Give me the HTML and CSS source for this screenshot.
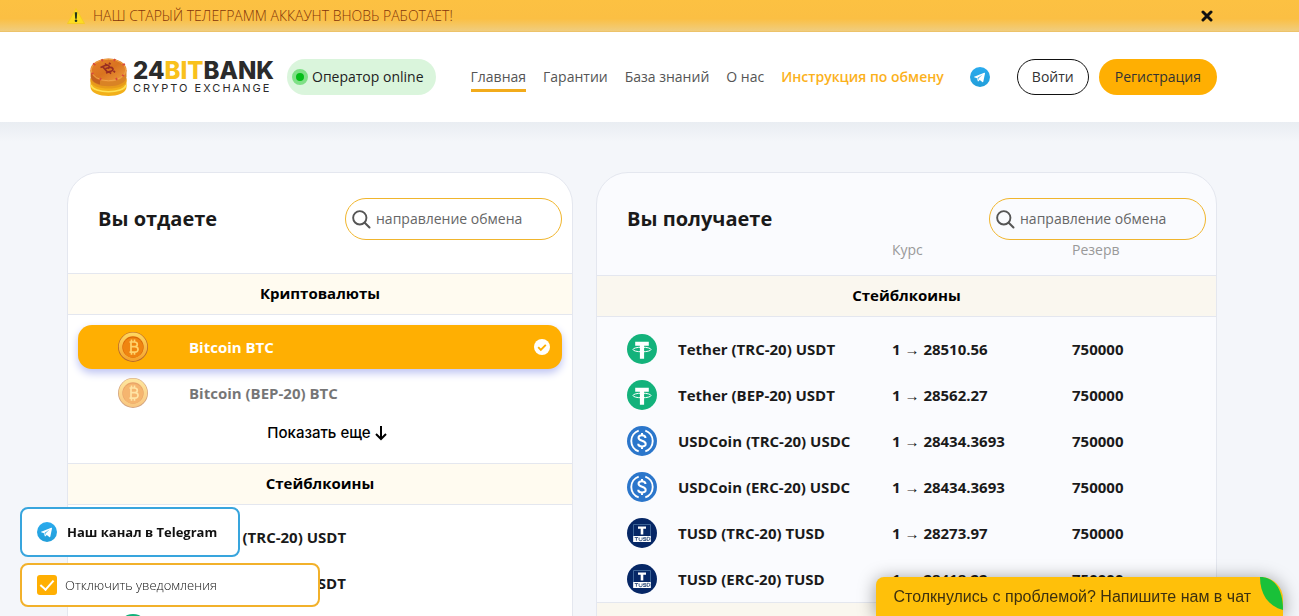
FILE: index.html
```html
<!DOCTYPE html>
<html lang="ru">
<head>
<meta charset="utf-8">
<meta name="viewport" content="width=device-width, initial-scale=1">
<title>24BitBank</title>
<link rel="stylesheet" href="styles.css">
</head>
<body>
<svg class="sprite" aria-hidden="true">
  <defs>
    <linearGradient id="goldFace" x1="0" y1="0" x2="1" y2="1"><stop offset="0" stop-color="#e8832c"/><stop offset=".5" stop-color="#d9731f"/><stop offset="1" stop-color="#f0a040"/></linearGradient>
    <linearGradient id="btcRing" x1="0" y1="0" x2="0" y2="1"><stop offset="0" stop-color="#ffd860"/><stop offset="1" stop-color="#f5a22c"/></linearGradient>
    <linearGradient id="tgBlue" x1="0" y1="0" x2="0" y2="1"><stop offset="0" stop-color="#2aabee"/><stop offset="1" stop-color="#229ed9"/></linearGradient>
  </defs>
  <symbol id="telegram" viewBox="0 0 24 24">
    <circle cx="12" cy="12" r="12" fill="url(#tgBlue)"/>
    <path d="M5 11.8 17.1 7c.6-.2 1.1.1.9.9l-2 9.600c-.2.7-.6.9-1.200.5l-3.100-2.300-1.500 1.500c-.3.3-.7.2-.8-.2l-1.100-3.600-3.200-1c-.6-.2-.6-.4-.1-.6zm4 1.400.8 2.600.3-2.100 5-4.800z" fill="#fff"/>
  </symbol>
  <symbol id="search" viewBox="0 0 20 20">
    <circle cx="8.2" cy="8.2" r="7" fill="none" stroke="currentColor" stroke-width="2"/>
    <path d="m13.4 13.4 5 5" stroke="currentColor" stroke-width="2.2" stroke-linecap="round"/>
  </symbol>
  <symbol id="btc" viewBox="0 0 30 30">
    <circle cx="15" cy="15" r="15" fill="#b96a2c"/>
    <circle cx="15" cy="14.7" r="14.2" fill="url(#btcRing)"/>
    <circle cx="15" cy="15" r="10.7" fill="#d96808"/>
    <circle cx="15" cy="15.5" r="10.1" fill="#ef8410"/>
    <path d="M11.5 10h4.8c4 0 4 4.700 0 4.700h-3 3.500c4.300 0 4.300 5.500 0 5.500h-5.300M13 10v10M13.500 7.500V10m3-2.500V10m-3 10.200v2.500m3-2.500v2.500" fill="none" stroke="#ffd36b" stroke-width="1.700"/>
  </symbol>
  <symbol id="usdt" viewBox="0 0 30 30">
    <circle cx="15" cy="15" r="15" fill="#13b27b"/>
    <path d="M8.2 7.8h13.600v3.900h-4.700v13h-4.200v-13H8.200z" fill="#fff"/>
    <ellipse cx="15" cy="15.5" rx="9" ry="2.3" fill="none" stroke="#fff" stroke-width="1"/>
    <path d="M13 15.500v2.800h4v-2.800z" fill="#fff"/>
  </symbol>
  <symbol id="usdc" viewBox="0 0 30 30">
    <circle cx="15" cy="15" r="15" fill="#2b76cb"/>
    <path d="M11.7 4.600a11 11 0 0 0 0 20.800M18.300 4.600a11 11 0 0 1 0 20.800" fill="none" stroke="#fff" stroke-width="1.900"/>
    <path d="M18.5 12c-.2-3.700-7-3.500-7-.2 0 3.700 7.200 2.300 7.200 6.100 0 3.600-7.400 3.500-7.500-.2M15 7v2.500m0 11V23" fill="none" stroke="#fff" stroke-width="2"/>
  </symbol>
  <symbol id="tusd" viewBox="0 0 30 30">
    <circle cx="15" cy="15" r="15" fill="#062766"/>
    <path d="M6.5 6.500h17v17h-17z" fill="none" stroke="#4b74a3" stroke-width=".8"/>
    <path d="M11 8.500h8v2.300h-2.700v5.700h-2.600v-5.700H11z" fill="#fff"/>
    <path d="M6.200 18h17.600v6H6.200z" fill="#fff"/>
    <path d="M7.700 19.500h3.400m-1.700 0v3.200m2.700-3.200v2.200q0 1 1 1h1q1 0 1-1v-2.200m4 .2h-2.600v1.200h2.400v1.600h-2.700m3.900-3.200h1.400q1.400 0 1.400 1.500t-1.400 1.600h-1.400z" fill="none" stroke="#33517f" stroke-width=".9"/>
  </symbol>
</svg>

<div class="notice">
  <div class="wrap notice-in">
    <svg class="warn" viewBox="0 0 18 16" aria-hidden="true"><path d="M9 .5 17.500 15.500H.5z" fill="#fddc22" stroke="#f5cb25" stroke-linejoin="round"/><path d="M7.800 4.300h2.400l-.4 6.400H8.200z" fill="#23371c"/><circle cx="9" cy="12.800" r="1.300" fill="#23371c"/></svg>
    <p>НАШ СТАРЫЙ ТЕЛЕГРАММ АККАУНТ ВНОВЬ РАБОТАЕТ!</p>
    <button class="close" type="button" aria-label="Закрыть"><svg viewBox="0 0 12 12"><path d="m2 2 8 8m0-8-8 8" stroke="#111" stroke-width="3" stroke-linecap="round"/></svg></button>
  </div>
</div>

<header class="header">
  <div class="wrap header-in">
    <a class="logo" href="#">
      <svg viewBox="0 0 37 39" aria-hidden="true">
        <path d="M.5 21v8c0 12 36 12 36 0v-8z" fill="#f2b01a"/>
        <path d="M1 27c2 9 33 9 35 0" fill="none" stroke="#ffe154" stroke-width="1.700"/>
        <path d="M.5 20v3c1 10 35 10 36 0v-3z" fill="#e79a1b"/>
        <path d="M.5 12v6.500c0 13 36 13 36 0V12z" fill="#d98325"/>
        <path d="M1 14v3.500c0 6 5 8 9 9V20z" fill="#c4611f"/>
        <ellipse cx="18.500" cy="12" rx="18" ry="11.500" fill="url(#goldFace)"/>
        <ellipse cx="18.500" cy="12" rx="17.300" ry="10.800" fill="none" stroke="#f0a548" stroke-width="1"/>
        <path d="m3 5.500 2.500 1.500m6-5.500 1.500 1.500m12-2-1 2m11 3-2.500 1M1.500 16l2-1m6.500 7 1-2m16 2-1-2m8-2-2-1" stroke="#d9483d" stroke-width="1.800"/>
        <path d="m12.500 8.500 5 5.500 4-1c3-1.500 1-4-2-3.500l-4 1m-3-2 3.500-1.200c3-.7 4.500 2 2 3.200M10.500 9.500l3-1.200M16 15l3-1M15 5.500l1.500 1.700m2.500-2.500 1.500 1.700m-1 7.500 1.500 1.700m2.500-2.700 1.500 1.500" fill="none" stroke="#982d22" stroke-width="1.700"/>
      </svg>
      <span class="logo-text"><b>24<i>BIT</i>BANK</b><small>CRYPTO EXCHANGE</small></span>
    </a>
    <div class="status"><span class="dot"></span>Оператор online</div>
    <nav class="nav">
      <a class="active" href="#">Главная</a><a href="#">Гарантии</a><a href="#">База знаний</a><a href="#">О нас</a><a class="accent" href="#">Инструкция по обмену</a>
    </nav>
    <div class="actions">
      <a class="tg" href="#" aria-label="Telegram"><svg><use href="#telegram"/></svg></a>
      <button class="btn outline" type="button">Войти</button>
      <button class="btn solid" type="button">Регистрация</button>
    </div>
  </div>
</header>

<main class="main">
  <div class="wrap cards">
    <section class="card give">
      <div class="card-head">
        <h2>Вы отдаете</h2>
        <label class="search"><svg aria-hidden="true"><use href="#search"/></svg><input type="text" placeholder="направление обмена" aria-label="направление обмена"></label>
      </div>
      <h3 class="band">Криптовалюты</h3>
      <div class="list">
        <button class="option selected" type="button"><svg class="coin"><use href="#btc"/></svg><span>Bitcoin BTC</span>
          <svg class="check" viewBox="0 0 16 16"><circle cx="8" cy="8" r="8" fill="#fff"/><path d="m4.200 8.200 2.600 2.600 5-5" fill="none" stroke="#ffaf02" stroke-width="1.900"/></svg></button>
        <button class="option faded" type="button"><svg class="coin"><use href="#btc"/></svg><span>Bitcoin (BEP-20) BTC</span></button>
      </div>
      <button class="more" type="button">Показать еще<svg viewBox="0 0 12 16"><path d="M6 1v13M1 9l5 5 5-5" fill="none" stroke="#000" stroke-width="2"/></svg></button>
      <h3 class="band">Стейблкоины</h3>
      <div class="list">
        <button class="option" type="button"><svg class="coin"><use href="#usdt"/></svg><span>Tether (TRC-20) USDT</span></button>
        <button class="option" type="button"><svg class="coin"><use href="#usdt"/></svg><span>Tether (BEP-20) USDT</span></button>
        <button class="option" type="button" aria-label="Tether"><svg class="coin"><use href="#usdt"/></svg></button>
      </div>
    </section>

    <section class="card get">
      <div class="card-head">
        <h2>Вы получаете</h2>
        <label class="search"><svg aria-hidden="true"><use href="#search"/></svg><input type="text" placeholder="направление обмена" aria-label="направление обмена"></label>
      </div>
      <table class="rates">
        <colgroup><col class="c-icon"><col class="c-name"><col class="c-rate"><col></colgroup>
        <thead><tr><td></td><td></td><th scope="col">Курс</th><th scope="col">Резерв</th></tr></thead>
        <tbody><tr><th class="band" colspan="4">Стейблкоины</th></tr></tbody>
        <tbody class="rows">
          <tr><td><svg class="coin"><use href="#usdt"/></svg></td><td>Tether (TRC-20) USDT</td><td>1 <span class="arr">→</span> 28510.56</td><td>750000</td></tr>
          <tr><td><svg class="coin"><use href="#usdt"/></svg></td><td>Tether (BEP-20) USDT</td><td>1 <span class="arr">→</span> 28562.27</td><td>750000</td></tr>
          <tr><td><svg class="coin"><use href="#usdc"/></svg></td><td>USDCoin (TRC-20) USDC</td><td>1 <span class="arr">→</span> 28434.3693</td><td>750000</td></tr>
          <tr><td><svg class="coin"><use href="#usdc"/></svg></td><td>USDCoin (ERC-20) USDC</td><td>1 <span class="arr">→</span> 28434.3693</td><td>750000</td></tr>
          <tr><td><svg class="coin"><use href="#tusd"/></svg></td><td>TUSD (TRC-20) TUSD</td><td>1 <span class="arr">→</span> 28273.97</td><td>750000</td></tr>
          <tr><td><svg class="coin"><use href="#tusd"/></svg></td><td>TUSD (ERC-20) TUSD</td><td>1 <span class="arr">→</span> 28418.22</td><td>750000</td></tr>
        </tbody>
        <tbody><tr><th class="band" colspan="4"></th></tr></tbody>
      </table>
    </section>
  </div>
</main>

<div class="floats">
  <a class="float channel" href="#"><svg><use href="#telegram"/></svg>Наш канал в Telegram</a>
  <label class="float mute"><input type="checkbox" checked>Отключить уведомления</label>
</div>
<button class="chat" type="button">Столкнулись с проблемой? Напишите нам в чат<svg viewBox="0 0 23 33" aria-hidden="true"><path d="M0 0C13 0 23 10 23 33 8 29 0 17 0 0z" fill="#19c139"/></svg></button>
</body>
</html>
```
FILE: styles.css
```css
* { box-sizing: border-box; }
html { scrollbar-width: none; }
body { margin: 0; background: #f4f6fa; color: #1a1a1a; font: 14px/20px "Open Sans", "Noto Sans", sans-serif; }
h2, h3, p { margin: 0; }
button { font: inherit; color: inherit; border: 0; padding: 0; background: none; cursor: pointer; }
a { color: inherit; text-decoration: none; }
.sprite { position: absolute; width: 0; height: 0; }

.notice, .header, .main { padding-right: 15px; }
.wrap { max-width: 1150px; margin: 0 auto; }

.notice { background: linear-gradient(#fcc142, #fbbf43 60%, #f0cd7e); border-bottom: 1px solid #edc36a; }
.notice-in { display: flex; align-items: center; height: 31px; color: #84350a; font-weight: 300; }
.warn { width: 18px; height: 16px; margin-right: 8px; }
.close { margin-left: auto; padding: 0 4px; display: flex; }
.close svg { width: 12px; height: 12px; }

.header { background: #fff; }
.header-in { display: flex; align-items: center; height: 90px; }
.logo { display: flex; align-items: center; gap: 6px; margin-left: 23px; }
.logo > svg { width: 37px; height: 39px; }
.logo-text { display: flex; flex-direction: column; width: 142px; font-family: Inter, sans-serif; color: #2b2b2b; }
.logo-text b { font-size: 24px; line-height: 22px; font-weight: 800; }
.logo-text i { font-style: normal; color: #f9c11c; }
.logo-text small { font-size: 11px; line-height: 12px; letter-spacing: 2px; white-space: nowrap; }
.status { display: flex; align-items: center; height: 36px; margin-left: 12px; padding: 0 12px 0 5px; border-radius: 18px; background: #daf5dc; color: #222; white-space: nowrap; }
.dot { width: 16px; height: 16px; margin-right: 4px; border: 4px solid #7fe086; border-radius: 50%; background: #04bd18; }
.nav { display: flex; gap: 17px; margin-left: 35px; color: #555; white-space: nowrap; }
.nav a { padding: 5px 0 2px; border-bottom: 3px solid transparent; }
.nav .active { border-color: #f2ab1b; }
.nav .accent { color: #fbb11c; font-weight: 600; }
.actions { display: flex; align-items: center; margin-left: auto; }
.tg { display: flex; margin-right: 27px; }
.tg svg { width: 20px; height: 20px; }
.btn { height: 36px; padding: 0 14px; border-radius: 18px; color: #333; }
.outline { border: 1px solid #111; margin-right: 10px; background: #fff; }
.solid { background: #ffaf02; padding: 0 16px; }

.main { padding-top: 50px; background: linear-gradient(#e9edf2, #f4f6fa 20px); }
.cards { display: grid; grid-template-columns: 506fr 621fr; gap: 23px; align-items: start; }
.card { border: 1px solid #e4e7ef; border-radius: 32px 32px 0 0; background: #fff; overflow: hidden; }
.get { background: #fafbfe; }
.card-head { display: flex; justify-content: space-between; align-items: center; padding: 25px 10px 0 30px; }
.give .card-head { padding-bottom: 33px; }
.card h2 { font-size: 20px; line-height: 28px; font-weight: 700; }
.search { display: flex; align-items: center; gap: 5px; width: 217px; height: 42px; padding: 0 6px; border: 1px solid #f0b52d; border-radius: 21px; color: #555; }
.search svg { width: 19px; height: 19px; flex: none; }
.search input { width: 100%; min-width: 0; padding: 0; border: 0; outline: 0; background: none; font: inherit; color: inherit; }
.search input::placeholder { color: #666; opacity: 1; }
.band { height: 42px; padding: 0; border: solid #e4e7ef; border-width: 1px 0; background: #fffbf0; color: #000; font-size: 15px; line-height: 38px; font-weight: 700; text-align: center; }
.get .band { padding-bottom: 2px; background: #faf7ef; }
.list { display: grid; gap: 2px; padding: 10px; }
.option { display: flex; align-items: center; height: 44px; padding: 0 12px 0 40px; border-radius: 14px; font-size: 15px; font-weight: 700; text-align: left; }
.coin { display: block; width: 30px; height: 30px; }
.option span { margin-left: 41px; }
.option.selected { background: #ffaf02; color: #fff; box-shadow: 0 4px 8px #bcc2f2; }
.check { width: 16px; height: 16px; margin-left: auto; }
.faded { opacity: .6; }
.more { display: flex; justify-content: center; align-items: center; gap: 4px; width: 100%; height: 16px; margin-bottom: 22px; padding-left: 14px; color: #000; font: 500 15px/16px Inter, sans-serif; }
.more svg { width: 12px; height: 16px; }

.rates { width: 100%; table-layout: fixed; border-collapse: separate; border-spacing: 0; }
.rates td { padding: 0; }
.c-icon { width: 81px; }
.c-name { width: 214px; }
.c-rate { width: 180px; }
.rates thead th { height: 35px; padding: 0 0 15px; color: #999; font-weight: 400; text-align: left; }
.rows::before { content: ""; display: table-row; height: 9px; }
.rows td { height: 46px; font-size: 15px; font-weight: 700; white-space: nowrap; }
.rows .coin { margin-left: 30px; }
.arr { font-family: "Liberation Sans", sans-serif; font-weight: 400; }

.floats { position: fixed; left: 20px; bottom: 9px; display: grid; justify-items: start; gap: 6px; }
.float { display: flex; align-items: center; border: 2px solid; border-radius: 8px; background: #fff; padding: 0 15px; }
.channel { width: 220px; height: 50px; gap: 10px; border-color: #38a5dd; color: #111; font-size: 13px; font-weight: 700; white-space: nowrap; }
.channel svg { width: 20px; height: 20px; flex: none; }
.mute { width: 300px; height: 44px; gap: 8px; border-color: #f2b12b; color: #111; font-size: 13px; font-weight: 300; }
.mute input { width: 20px; height: 20px; margin: 0; appearance: none; border-radius: 3px; background: #ffaf02; display: grid; place-items: center; }
.mute input::before { content: ""; width: 6px; height: 11px; margin-bottom: 3px; border: solid #fff; border-width: 0 2px 2px 0; rotate: 42deg; }
.chat { position: fixed; right: 16px; bottom: 0; display: flex; align-items: center; gap: 9px; height: 39px; padding-left: 17px; border-radius: 8px 22px 0 0; background: #ffc00a; color: #3d300f; box-shadow: 0 2px 18px #0006; font: 16px/20px "Liberation Sans", Arial, sans-serif; white-space: nowrap; }
.chat svg { width: 23px; height: 33px; align-self: flex-start; }
```
